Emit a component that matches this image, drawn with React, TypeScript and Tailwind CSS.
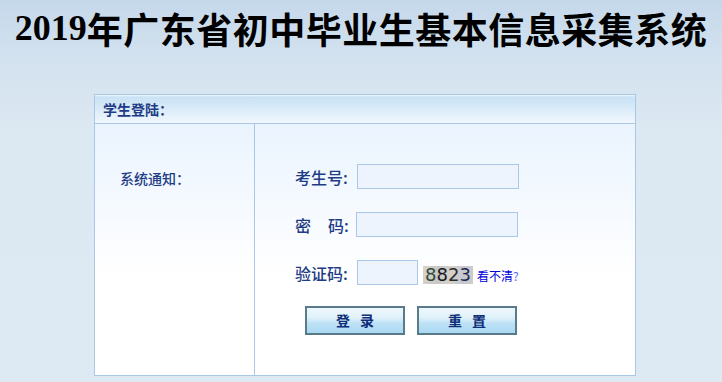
import React from "react";

export default function App() {
  const cjk = '"Noto Sans CJK SC", "Liberation Sans", sans-serif';
  return (
    <div className="w-[722px] h-[382px] overflow-hidden flex flex-col bg-[linear-gradient(to_bottom,#c5d8ea_0px,#d3e2ef_60px,#dce8f2_130px,#dde9f3_100%)]">
      <div
        className="h-[55px] flex items-center justify-center pl-[0px] text-black font-bold text-[36px] leading-none whitespace-nowrap"
        style={{ fontFamily: '"Liberation Serif", "Noto Sans CJK SC", serif' }}
      >
        <span>2019</span>
        <span className="tracking-[0.5px]" style={{ fontFamily: '"Noto Sans CJK SC", serif' }}>年广东省初中毕业生基本信息采集系统</span>
      </div>
      <div className="mt-[39px] ml-[94px] w-[542px] h-[282px] border border-[#a8c8e6] flex flex-col" style={{ fontFamily: cjk }}>
        <div className="h-[29px] shrink-0 border-b border-[#a8c8e6] bg-[linear-gradient(to_bottom,#f3f8fc_0px,#c9e2f5_2px,#d8eaf7_45%,#f1f7fd_100%)] flex items-center pl-[8px] text-[14px] text-[#1d3c85] font-semibold">
          学生登陆：
        </div>
        <div className="flex-1 flex bg-[linear-gradient(to_bottom,#eaf4fe_0%,#f6faff_35%,#ffffff_60%,#ffffff_100%)]">
          <div className="w-[160px] shrink-0 border-r border-[#a8c8e6] pl-[25px] pt-[44px]">
            <div className="text-[14px] leading-[20px] text-[#1d3c85] font-medium">系统通知：</div>
          </div>
          <div className="flex-1 flex flex-col pl-[40px] pt-[40px] text-[#1d3c85]">
            <div className="flex items-center h-[25px]">
              <span className="w-[62px] text-[16px] leading-none font-medium">考生号:</span>
              <div className="w-[162px] h-[25px] border border-[#a9c8e8] bg-[#edf4fd]" />
            </div>
            <div className="flex items-center h-[25px] mt-[23px]">
              <span className="w-[61px] text-[16px] leading-none font-medium">
                密<span className="inline-block w-[17px]" />码:
              </span>
              <div className="w-[162px] h-[25px] border border-[#a9c8e8] bg-[#edf4fd]" />
            </div>
            <div className="flex items-center h-[25px] mt-[23px]">
              <span className="w-[62px] text-[16px] leading-none font-medium">验证码:</span>
              <div className="w-[61px] h-[25px] border border-[#a9c8e8] bg-[#edf4fd]" />
              <div
                className="ml-[5px] mt-[4px] w-[50px] h-[18px] flex items-center justify-center text-[18px] leading-none bg-[linear-gradient(100deg,#d9d4cc_0%,#c8c6c8_30%,#d6d0c6_55%,#c4c7d0_80%,#d2ccc4_100%)]"
                style={{ fontFamily: '"DejaVu Sans", sans-serif' }}
              >
                <span className="text-[#2f4a35]">8</span>
                <span className="text-[#15191c]">8</span>
                <span className="text-[#2a2d33]">2</span>
                <span className="text-[#1c2a52]">3</span>
              </div>
              <span className="ml-[4px] mt-[6px] text-[12px] leading-none text-[#0000dd]">
                看不清<span className="text-[#5566ff]">?</span>
              </span>
            </div>
            <div className="flex mt-[21px] ml-[10px] gap-[12px]">
              <button className="w-[100px] h-[29px] border-2 border-[#5a7b8a] bg-[linear-gradient(to_bottom,#eef8fc_0%,#dff1f9_40%,#bfe2f6_60%,#aad8f3_100%)] text-[14px] font-bold text-[#0e2c78] flex items-center justify-center tracking-[10px] pl-[10px]">
                登录
              </button>
              <button className="w-[100px] h-[29px] border-2 border-[#5a7b8a] bg-[linear-gradient(to_bottom,#eef8fc_0%,#dff1f9_40%,#bfe2f6_60%,#aad8f3_100%)] text-[14px] font-bold text-[#0e2c78] flex items-center justify-center tracking-[10px] pl-[10px]">
                重置
              </button>
            </div>
          </div>
        </div>
      </div>
    </div>
  );
}
